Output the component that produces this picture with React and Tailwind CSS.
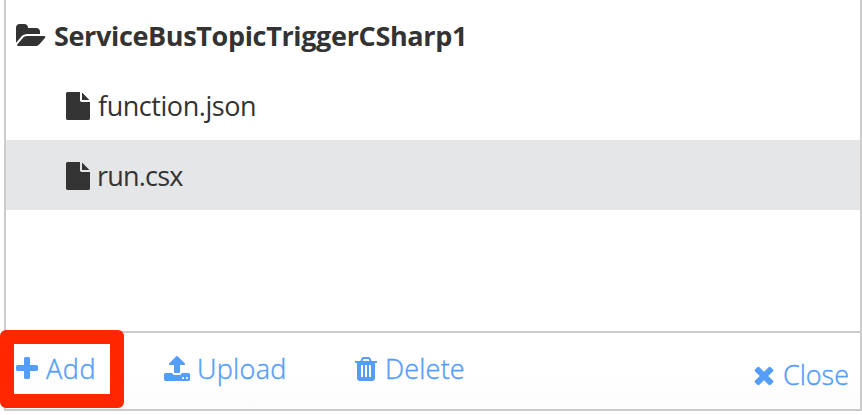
const paths = {
  folder:
    'M1815 952q0 31-31 66l-336 396q-43 51-120.5 86.5t-143.5 35.5h-1088q-34 0-60.5-13t-26.5-43q0-31 31-66l336-396q43-51 120.5-86.5t143.5-35.5h1088q34 0 60.5 13t26.5 43zm-343-344v160h-832q-94 0-197 47.5t-164 119.5l-337 396-5 6q0-4-.5-12.5t-.5-12.5v-960q0-92 66-158t158-66h320q92 0 158 66t66 158v32h544q92 0 158 66t66 158z',
  file:
    'M1152 512v-472q22 14 36 28l408 408q14 14 28 36h-472zm-128 32q0 40 28 68t68 28h544v1056q0 40-28 68t-68 28h-1344q-40 0-68-28t-28-68v-1600q0-40 28-68t68-28h800v544z',
  plus:
    'M1600 736v192q0 40-28 68t-68 28h-416v416q0 40-28 68t-68 28h-192q-40 0-68-28t-28-68v-416h-416q-40 0-68-28t-28-68v-192q0-40 28-68t68-28h416v-416q0-40 28-68t68-28h192q40 0 68 28t28 68v416h416q40 0 68 28t28 68z',
  upload:
    'M1344 1472q0-26-19-45t-45-19-45 19-19 45 19 45 45 19 45-19 19-45zm256 0q0-26-19-45t-45-19-45 19-19 45 19 45 45 19 45-19 19-45zm128-224v320q0 40-28 68t-68 28h-1472q-40 0-68-28t-28-68v-320q0-40 28-68t68-28h427q21 56 70.5 92t110.5 36h256q61 0 110.5-36t70.5-92h427q40 0 68 28t28 68zm-325-648q-17 40-59 40h-256v448q0 26-19 45t-45 19h-256q-26 0-45-19t-19-45v-448h-256q-42 0-59-40-17-39 14-69l448-448q18-19 45-19t45 19l448 448q31 30 14 69z',
  trash:
    'M704 1376v-704q0-14-9-23t-23-9h-64q-14 0-23 9t-9 23v704q0 14 9 23t23 9h64q14 0 23-9t9-23zm256 0v-704q0-14-9-23t-23-9h-64q-14 0-23 9t-9 23v704q0 14 9 23t23 9h64q14 0 23-9t9-23zm256 0v-704q0-14-9-23t-23-9h-64q-14 0-23 9t-9 23v704q0 14 9 23t23 9h64q14 0 23-9t9-23zm-544-992h448l-48-117q-7-9-17-11h-317q-10 2-17 11zm928 32v64q0 14-9 23t-23 9h-96v948q0 83-47 143.5t-113 60.5h-832q-66 0-113-58.5t-47-141.5v-952h-96q-14 0-23-9t-9-23v-64q0-14 9-23t23-9h309l70-167q15-37 54-63t79-26h320q40 0 79 26t54 63l70 167h309q14 0 23 9t9 23z',
  times:
    'M1490 1322q0 40-28 68l-136 136q-28 28-68 28t-68-28l-294-294-294 294q-28 28-68 28t-68-28l-136-136q-28-28-28-68t28-68l294-294-294-294q-28-28-28-68t28-68l136-136q28-28 68-28t68 28l294 294 294-294q28-28 68-28t68 28l136 136q28 28 28 68t-28 68l-294 294 294 294q28 28 28 68z',
};

function Icon({ name, className }) {
  return (
    <svg viewBox="0 0 1792 1792" fill="currentColor" className={`size-7 shrink-0 overflow-visible ${className ?? ''}`}>
      <path d={paths[name]} />
    </svg>
  );
}

function FileRow({ name, textClass, selected }) {
  return (
    <li className={`flex h-[70px] items-center pl-[58px] ${selected ? 'bg-[#e5e6e8]' : ''}`}>
      <Icon name="file" className="mt-0.5" />
      <span className={`whitespace-nowrap text-[27px] leading-9 ${textClass}`}>{name}</span>
    </li>
  );
}

function Action({ icon, label, className, textClass }) {
  return (
    <button className={`flex h-9 items-center text-left ${className}`}>
      <Icon name={icon} />
      <span className={`whitespace-nowrap text-[27px] font-light leading-9 [-webkit-text-stroke:0.4px_#549df8] ${textClass}`}>
        {label}
      </span>
    </button>
  );
}

export default function App() {
  return (
    <div className="relative h-[415px] w-[862px] overflow-hidden bg-white pl-1 font-['Open_Sans','Noto_Sans',sans-serif] text-[#333]">
      <div className="flex h-[411px] flex-col border-x-2 border-b-2 border-[#ccc]">
        <div className="flex h-[70px] items-center pl-[11px]">
          <Icon name="folder" className="mt-0.5" />
          <span className="ml-[9px] mt-0.5 whitespace-nowrap text-[27px] font-bold leading-9 tracking-[-0.35px]">
            ServiceBusTopicTriggerCSharp1
          </span>
        </div>
        <ul className="grow">
          <FileRow name="function.json" textClass="ml-[6px] mt-0.5 tracking-[-0.45px]" />
          <FileRow name="run.csx" textClass="ml-[5px] mt-0.5 tracking-[-0.8px]" selected />
        </ul>
        <div className="flex h-[78px] border-t-2 border-[#ccc] bg-linear-to-b from-white from-50% to-[#fcfcfc] pt-[18px] text-[#549df8]">
          <Action icon="plus" label="Add" className="ml-[7px] w-[150px]" textClass="ml-[5px] tracking-[0.6px]" />
          <Action icon="upload" label="Upload" className="w-[189px]" textClass="ml-[6px] tracking-[0.3px]" />
          <Action icon="trash" label="Delete" className="w-[150px]" textClass="ml-[5px] tracking-[0.2px]" />
          <Action icon="times" label="Close" className="ml-auto mr-[11px] mt-1.5" textClass="ml-[5px]" />
        </div>
      </div>
      <div className="absolute left-0 top-[330px] h-[78px] w-[124px] rounded-md border-14 border-[#ff2600]" />
    </div>
  );
}
